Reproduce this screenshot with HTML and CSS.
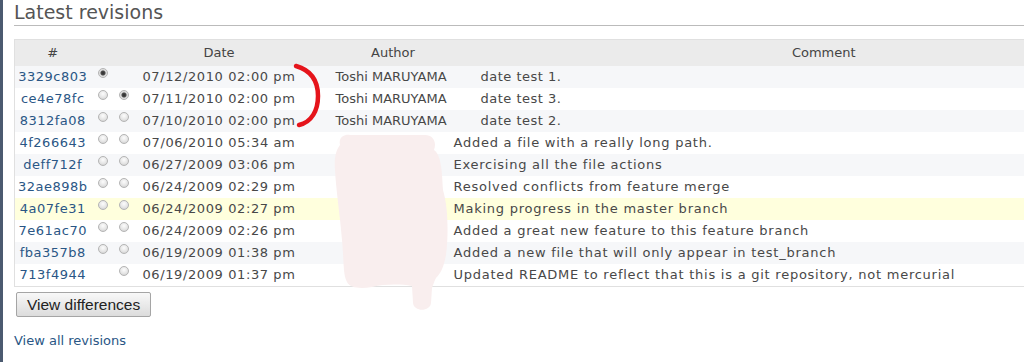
FILE: index.html
```html
<!DOCTYPE html>
<html lang="en">
<head>
  <meta charset="UTF-8">
  <title>Latest revisions</title>
  <link rel="stylesheet" href="styles.css">
</head>
<body>
  <div class="edge"></div>
  <div class="content">
    <h2>Latest revisions</h2>

    <form class="revisions">
      <table class="list">
        <colgroup>
          <col class="c-id"><col class="c-radio1"><col class="c-radio2">
          <col class="c-date"><col class="c-author"><col class="c-comment">
        </colgroup>
        <thead>
          <tr>
            <th>#</th><th></th><th></th>
            <th>Date</th><th class="author">Author</th><th>Comment</th>
          </tr>
        </thead>
        <tbody>
          <tr class="odd">
            <td class="id"><a href="#">3329c803</a></td>
            <td class="radio"><span class="rb checked"></span></td>
            <td class="radio"></td>
            <td class="date">07/12/2010 02:00 pm</td>
            <td class="author">Toshi MARUYAMA</td>
            <td class="comment indent">date test 1.</td>
          </tr>
          <tr class="even">
            <td class="id"><a href="#">ce4e78fc</a></td>
            <td class="radio"><span class="rb"></span></td>
            <td class="radio"><span class="rb checked"></span></td>
            <td class="date">07/11/2010 02:00 pm</td>
            <td class="author">Toshi MARUYAMA</td>
            <td class="comment indent">date test 3.</td>
          </tr>
          <tr class="odd">
            <td class="id"><a href="#">8312fa08</a></td>
            <td class="radio"><span class="rb"></span></td>
            <td class="radio"><span class="rb"></span></td>
            <td class="date">07/10/2010 02:00 pm</td>
            <td class="author">Toshi MARUYAMA</td>
            <td class="comment indent">date test 2.</td>
          </tr>
          <tr class="even">
            <td class="id"><a href="#">4f266643</a></td>
            <td class="radio"><span class="rb"></span></td>
            <td class="radio"><span class="rb"></span></td>
            <td class="date">07/06/2010 05:34 am</td>
            <td class="author"></td>
            <td class="comment">Added a file with a really long path.</td>
          </tr>
          <tr class="odd">
            <td class="id"><a href="#">deff712f</a></td>
            <td class="radio"><span class="rb"></span></td>
            <td class="radio"><span class="rb"></span></td>
            <td class="date">06/27/2009 03:06 pm</td>
            <td class="author"></td>
            <td class="comment">Exercising all the file actions</td>
          </tr>
          <tr class="even">
            <td class="id"><a href="#">32ae898b</a></td>
            <td class="radio"><span class="rb"></span></td>
            <td class="radio"><span class="rb"></span></td>
            <td class="date">06/24/2009 02:29 pm</td>
            <td class="author"></td>
            <td class="comment">Resolved conflicts from feature merge</td>
          </tr>
          <tr class="odd hover">
            <td class="id"><a href="#">4a07fe31</a></td>
            <td class="radio"><span class="rb"></span></td>
            <td class="radio"><span class="rb"></span></td>
            <td class="date">06/24/2009 02:27 pm</td>
            <td class="author"></td>
            <td class="comment">Making progress in the master branch</td>
          </tr>
          <tr class="even">
            <td class="id"><a href="#">7e61ac70</a></td>
            <td class="radio"><span class="rb"></span></td>
            <td class="radio"><span class="rb"></span></td>
            <td class="date">06/24/2009 02:26 pm</td>
            <td class="author"></td>
            <td class="comment">Added a great new feature to this feature branch</td>
          </tr>
          <tr class="odd">
            <td class="id"><a href="#">fba357b8</a></td>
            <td class="radio"><span class="rb"></span></td>
            <td class="radio"><span class="rb"></span></td>
            <td class="date">06/19/2009 01:38 pm</td>
            <td class="author"></td>
            <td class="comment">Added a new file that will only appear in test_branch</td>
          </tr>
          <tr class="even">
            <td class="id"><a href="#">713f4944</a></td>
            <td class="radio"></td>
            <td class="radio"><span class="rb"></span></td>
            <td class="date">06/19/2009 01:37 pm</td>
            <td class="author"></td>
            <td class="comment">Updated README to reflect that this is a git repository, not mercurial</td>
          </tr>
        </tbody>
      </table>
      <button type="button" class="button">View differences</button>
    </form>

    <p class="more"><a href="#">View all revisions</a></p>
  </div>

  <!-- hand drawn marks on top of the screenshot -->
  <svg class="marks" width="1024" height="362" viewBox="0 0 1024 362">
    <path d="M340,145 C338,136 346,134 350,135 L425,135 C433,135 437,142 434,150 C441,155 442,170 443,190 C449,210 448,240 446,255 C444,265 442,272 436,278 C434,282 433,285 432,288 L431,303 C430,312 414,312 413,303 L412,286 C400,284 385,284 372,287 C360,289 350,288 347,282 C343,275 344,262 342,240 C340,215 336,190 335,170 C334,158 336,150 340,145 Z" fill="#f9eeee"/>
    <path d="M296,66 C310,70 318,80 318,96 C318,110 312,122 299,125" fill="none" stroke="#e5141b" stroke-width="4.5" stroke-linecap="round"/>
  </svg>
</body>
</html>
```

FILE: styles.css
```css
/* page frame */
body {
  margin: 0;
  display: flex;
  align-items: flex-start;
  height: 362px;
  overflow: hidden;
  font-family: 'DejaVu Sans', sans-serif;
  font-size: 13px;
  color: #484848;
  background: #fff;
}

.edge {
  width: 3px;
  height: 362px;
  flex-shrink: 0;
  background: #4b5a70;
}

.content {
  flex-shrink: 0;
  width: 1184px;
  padding-left: 11px;
}

a {
  color: #2a5685;
  text-decoration: none;
}

h2 {
  margin: 0 0 13px;
  padding: 1px 0 2px;
  line-height: 22px;
  font-size: 19px;
  font-weight: normal;
  color: #555;
  border-bottom: 1px solid #bbb;
}

/* revisions table */
table.list {
  width: 1184px;
  table-layout: fixed;
  border-collapse: collapse;
  border: 1px solid #e0e0e0;
}

.c-id { width: 76px; }
.c-radio1 { width: 23px; }
.c-radio2 { width: 21px; }
.c-date { width: 169px; }
.c-author { width: 147px; }

table.list th {
  height: 26px;
  padding: 0;
  line-height: 16px;
  background: #ebebeb;
  font-weight: normal;
  color: #444;
  text-align: center;
}

table.list th.author {
  padding-left: 32px;
}

table.list tbody tr {
  height: 22px;
}

table.list td {
  height: 22px;
  padding: 0;
  line-height: 16px;
  white-space: nowrap;
  overflow: hidden;
}

tr.odd { background: #f6f7f9; }
tr.even { background: #fff; }
tr.hover { background: #ffffdd; }

table.list td.id {
  text-align: center;
  letter-spacing: 0.5px;
}

table.list td.radio {
  vertical-align: middle;
}

table.list td.date {
  text-align: center;
  letter-spacing: 0.6px;
}

table.list td.author {
  padding-left: 32px;
}

table.list td.comment {
  padding-left: 3px;
  letter-spacing: 0.75px;
}

table.list td.comment.indent {
  padding-left: 30px;
  letter-spacing: 0.5px;
}

/* radio buttons */
.rb {
  display: block;
  width: 10px;
  height: 10px;
  margin: 0 0 8px 7px;
  border-radius: 50%;
  box-sizing: border-box;
  border: 1px solid #b5b5b5;
  background: radial-gradient(circle at 50% 35%, #fcfcfc 0%, #e6e6e6 55%, #c8c8c8 100%);
}

td.radio + td.radio .rb {
  margin-left: 5px;
}

.rb.checked {
  background: radial-gradient(circle, #2e2e2e 0, #4a4a4a 2px, #d8d8d8 3px, #f4f4f4 100%);
}

/* actions */
.button {
  display: block;
  margin: 5px 0 0 2px;
  height: 25px;
  padding: 0 10px;
  font-family: 'Liberation Sans', Arial, sans-serif;
  font-size: 15.5px;
  color: #222;
  border: 1px solid #a5a5a5;
  border-radius: 2px;
  background: linear-gradient(#f8f8f8, #dcdcdc);
}

.more {
  margin: 16px 0 0;
  line-height: 16px;
}

.marks {
  position: absolute;
  top: 0;
  left: 0;
  pointer-events: none;
}
```
